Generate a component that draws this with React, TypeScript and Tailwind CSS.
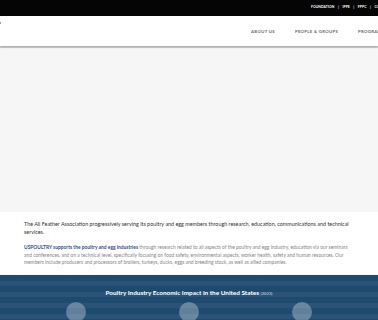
const topLinks = ['FOUNDATION', 'IPPE', 'FPPC', 'CONTACT'];
const navLinks = ['ABOUT US', 'PEOPLE & GROUPS', 'PROGRAMS'];

export default function App() {
  return (
    <div className="h-[320px] w-[378px] overflow-hidden bg-white font-['Lato','Liberation_Sans',sans-serif]">
      {/* utility bar */}
      <div className="flex h-[16px] items-center bg-[#050505] pl-[311px] text-[3.4px] font-bold tracking-[0.02em] text-white whitespace-nowrap">
        {topLinks.map((l, i) => (
          <span key={l} className="flex items-center">
            {i > 0 && <span className="px-[3.5px]">|</span>}
            {l}
          </span>
        ))}
      </div>

      {/* main nav */}
      <div className="relative flex h-[30px] items-center bg-white shadow-[0_1px_2px_rgba(0,0,0,0.25)]">
        <span className="absolute left-0 top-[6px] h-[2px] w-[1px] bg-[#7aa3d6]" />
        <nav className="ml-[251px] mt-[2px] flex gap-[20px] whitespace-nowrap text-[4.3px] font-bold tracking-[0.07em] text-[#6b6b6b]">
          {navLinks.map((l) => (
            <span key={l}>{l}</span>
          ))}
        </nav>
      </div>
      <div className="h-[2px] bg-[#d4d4d4]" />

      {/* hero placeholder */}
      <div className="h-[164px] bg-[#f6f6f6]" />

      {/* intro */}
      <div className="px-[24px] pt-[8px] pb-[8px]">
        <p className="text-[5.4px] leading-[8px] text-[#333]">
          The All Feather Association progressively serving its poultry and egg members through research, education,
          communications and technical services.
        </p>
        <p className="mt-[8px] text-[4.9px] leading-[7.5px] text-[#858585]">
          <span className="font-bold text-[#2e4f95]">USPOULTRY supports the poultry and egg industries</span> through
          research related to all aspects of the poultry and egg industry, education via our seminars and conferences,
          and on a technical level, specifically focusing on food safety, environmental aspects, worker health, safety
          and human resources. Our members include producers and processors of broilers, turkeys, ducks, eggs and
          breeding stock, as well as allied companies.
        </p>
      </div>

      {/* impact band */}
      <div className="h-[60px] bg-[#1f4a70] bg-[repeating-linear-gradient(180deg,transparent_0px,transparent_6px,rgba(255,255,255,0.05)_6px,rgba(255,255,255,0.05)_11px)] px-[20px] pt-[13px]">
        <div className="text-center text-[6.4px] font-bold text-white">
          Poultry Industry Economic Impact in the United States{' '}
          <span className="text-[4.2px] font-normal text-[#d6dfe8]">(2022)</span>
        </div>
        <div className="mt-[5px] grid grid-cols-3">
          {[0, 1, 2].map((i) => (
            <div key={i} className="flex justify-center">
              <div className="h-[20px] w-[20px] rounded-full bg-white/30" />
            </div>
          ))}
        </div>
      </div>
    </div>
  );
}
